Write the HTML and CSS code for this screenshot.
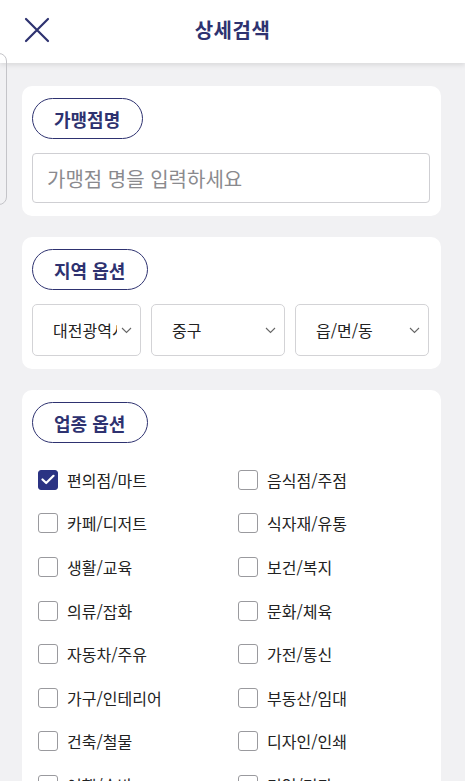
FILE: index.html
```html
<!DOCTYPE html>
<html lang="ko">
<head>
<meta charset="utf-8">
<link rel="stylesheet" href="styles.css">
</head>
<body>
<header class="header">
  <button class="close" aria-label="닫기">
    <svg width="26" height="26" viewBox="0 0 26 26"><path d="M2 2 L24 24 M24 2 L2 24" stroke="#2e3270" stroke-width="2.2" fill="none" stroke-linecap="round"/></svg>
  </button>
  <h1 class="title">상세검색</h1>
</header>
<div class="edge"></div>
<main class="content">
  <section class="card">
    <div class="chip">가맹점명</div>
    <div class="input">가맹점 명을 입력하세요</div>
  </section>
  <section class="card">
    <div class="chip">지역 옵션</div>
    <div class="selects">
      <div class="select s1"><span class="sel-text">대전광역시</span><svg class="chev" width="11" height="7" viewBox="0 0 11 7"><path d="M1 1 L5.5 5.5 L10 1" stroke="#666" stroke-width="1.1" fill="none"/></svg></div>
      <div class="select s2"><span class="sel-text">중구</span><svg class="chev" width="11" height="7" viewBox="0 0 11 7"><path d="M1 1 L5.5 5.5 L10 1" stroke="#666" stroke-width="1.1" fill="none"/></svg></div>
      <div class="select s3"><span class="sel-text">읍/면/동</span><svg class="chev" width="11" height="7" viewBox="0 0 11 7"><path d="M1 1 L5.5 5.5 L10 1" stroke="#666" stroke-width="1.1" fill="none"/></svg></div>
    </div>
  </section>
  <section class="card last">
    <div class="chip">업종 옵션</div>
    <div class="checks">
      <label class="check"><span class="box on"><svg width="14" height="11" viewBox="0 0 14 11"><path d="M1.5 5.5 L5.2 9 L12.5 1.8" stroke="#fff" stroke-width="2.2" fill="none" stroke-linecap="round" stroke-linejoin="round"/></svg></span>편의점/마트</label>
      <label class="check"><span class="box"></span>음식점/주점</label>
      <label class="check"><span class="box"></span>카페/디저트</label>
      <label class="check"><span class="box"></span>식자재/유통</label>
      <label class="check"><span class="box"></span>생활/교육</label>
      <label class="check"><span class="box"></span>보건/복지</label>
      <label class="check"><span class="box"></span>의류/잡화</label>
      <label class="check"><span class="box"></span>문화/체육</label>
      <label class="check"><span class="box"></span>자동차/주유</label>
      <label class="check"><span class="box"></span>가전/통신</label>
      <label class="check"><span class="box"></span>가구/인테리어</label>
      <label class="check"><span class="box"></span>부동산/임대</label>
      <label class="check"><span class="box"></span>건축/철물</label>
      <label class="check"><span class="box"></span>디자인/인쇄</label>
      <label class="check"><span class="box"></span>여행/숙박</label>
      <label class="check"><span class="box"></span>기업/기관</label>
    </div>
  </section>
</main>
</body>
</html>
```
FILE: styles.css
```css
* { box-sizing: border-box; }
html, body { margin: 0; padding: 0; }
body {
  width: 465px;
  height: 781px;
  overflow: hidden;
  background: #f1f1f3;
  font-family: "Noto Sans CJK KR", "Noto Sans", sans-serif;
  position: relative;
}
.header {
  height: 63px;
  background: #fff;
  display: flex;
  align-items: center;
  justify-content: center;
  position: relative;
  box-shadow: 0 2px 5px rgba(0,0,0,0.10);
  z-index: 2;
}
.close {
  position: absolute;
  left: 24px;
  top: 17px;
  border: 0;
  background: none;
  padding: 0;
  width: 26px;
  height: 26px;
}
.close svg { display: block; }
.title {
  margin: 0;
  font-size: 20px;
  font-weight: 700;
  color: #2e3270;
  letter-spacing: 0.5px;
  margin-top: -4px;
}
.edge {
  position: absolute;
  left: -12px;
  top: 53px;
  width: 19px;
  height: 152px;
  border: 1px solid #c4c4c8;
  border-radius: 8px;
  z-index: 3;
}
.content {
  padding: 23px 24px 0 22px;
  display: flex;
  flex-direction: column;
  gap: 21px;
}
.card {
  background: #fff;
  border-radius: 10px;
  padding: 12px 11px 13px 10px;
}
.card.last { padding-bottom: 40px; }
.chip {
  display: inline-flex;
  align-items: center;
  height: 41px;
  padding: 0 22px 0 21px;
  border: 1.5px solid #2e3270;
  border-radius: 21px;
  font-size: 18px;
  font-weight: 700;
  color: #2e3270;
}
.input {
  margin-top: 14px;
  height: 50px;
  border: 1px solid #cfcfd3;
  border-radius: 4px;
  display: flex;
  align-items: center;
  padding-left: 14px;
  font-size: 20px;
  color: #8a8a8e;
}
.selects {
  margin-top: 14px;
  display: flex;
  gap: 10px;
}
.select {
  height: 52px;
  border: 1px solid #d3d3d6;
  border-radius: 5px;
  display: flex;
  align-items: center;
  padding: 0 8px 0 20px;
  font-size: 16px;
  color: #222;
}
.s1 { width: 109px; }
.s2 { width: 134px; }
.s3 { width: 134px; }
.sel-text {
  flex: 1;
  overflow: hidden;
  white-space: nowrap;
}
.chev { flex: none; margin-left: 4px; }
.checks {
  margin-top: 15px;
  padding-left: 6px;
  display: grid;
  grid-template-columns: 200px 200px;
  grid-auto-rows: 43.6px;
}
.check {
  display: flex;
  align-items: center;
  font-size: 16px;
  color: #222;
}
.box {
  width: 20px;
  height: 20px;
  border: 1px solid #9a9a9e;
  border-radius: 3px;
  margin-right: 9px;
  display: flex;
  align-items: center;
  justify-content: center;
  flex: none;
}
.box.on {
  background: #2b3383;
  border-color: #2b3383;
}
```
